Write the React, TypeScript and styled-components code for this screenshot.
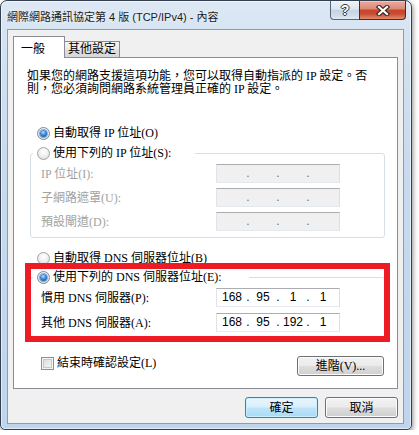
import React from 'react';
import styled, { createGlobalStyle, css } from 'styled-components';

const GlobalStyle = createGlobalStyle`
  html, body { margin: 0; padding: 0; background: #ffffff; }
  body {
    font-family: "Liberation Serif", "Noto Sans CJK TC", serif;
    font-size: 12px;
    color: #000;
  }
`;

const Window = styled.div`
  box-sizing: border-box;
  width: 412px;
  height: 430px;
  border: 1px solid #34404f;
  border-radius: 7px 7px 5px 5px;
  background: linear-gradient(180deg, #dde8f4 0%, #d4e2f1 10%, #c7daef 40%, #bed5ed 100%);
  box-shadow: 1px 2px 5px rgba(0, 0, 0, 0.45), inset 0 0 0 1px rgba(255, 255, 255, 0.55);
  padding: 0 7px 5px 6px;
  display: flex;
  flex-direction: column;
`;

const TitleBar = styled.div`
  height: 28px;
  flex: none;
  display: flex;
  align-items: flex-start;
  margin-right: -2px;
`;

const Title = styled.div`
  flex: 1;
  margin-top: 8px;
  font-family: "Liberation Sans", "Noto Sans CJK TC", sans-serif;
  font-size: 11px;
  line-height: 16px;
  color: #1b1b1b;
  white-space: nowrap;
  text-shadow: 0 0 5px rgba(255, 255, 255, 0.9);
`;

const CaptionGroup = styled.div`
  display: flex;
`;

const CaptionButton = styled.div<{ $close?: boolean }>`
  box-sizing: border-box;
  height: 19px;
  display: flex;
  align-items: center;
  justify-content: center;
  border: 1px solid;
  border-top: none;
  ${(p) =>
    p.$close
      ? css`
          width: 47px;
          border-color: #5b241b;
          border-radius: 0 0 4px 0;
          background: linear-gradient(180deg, #eaab9d 0%, #dd8b79 42%, #c6462e 52%, #c94b32 72%, #e28c6e 100%);
          box-shadow: inset 0 1px 0 rgba(255, 255, 255, 0.35);
        `
      : css`
          width: 29px;
          border-color: #5a6576;
          border-right: none;
          border-radius: 0 0 0 4px;
          background: linear-gradient(180deg, #edf3f9 0%, #dde7f1 45%, #c6d3e2 52%, #d0dcea 80%, #e0e9f3 100%);
          box-shadow: inset 0 1px 0 rgba(255, 255, 255, 0.6);
        `}
`;

const HelpGlyph = styled.span`
  font-family: "Liberation Sans", sans-serif;
  font-weight: bold;
  font-size: 14px;
  line-height: 14px;
  color: #ffffff;
  text-shadow: 1px 0 0 #2c3644, -1px 0 0 #2c3644, 0 1px 0 #2c3644, 0 -1px 0 #2c3644;
`;

const Client = styled.div`
  box-sizing: border-box;
  flex: 1;
  background: #f0f0f0;
  border: 1px solid #8f9cad;
  padding: 6px 5px 5px 5px;
  display: flex;
  flex-direction: column;
`;

const TabStrip = styled.div`
  display: flex;
  align-items: flex-end;
  height: 22px;
  margin-bottom: -1px;
  position: relative;
  z-index: 1;
  flex: none;
`;

const Tab = styled.div<{ $active?: boolean }>`
  box-sizing: border-box;
  border: 1px solid #898c95;
  border-bottom: none;
  line-height: 14px;
  white-space: nowrap;
  ${(p) =>
    p.$active
      ? css`
          width: 52px;
          height: 22px;
          padding: 5px 0 0 7px;
          background: #ffffff;
        `
      : css`
          width: 55px;
          height: 16px;
          margin-bottom: 1px;
          border-left: none;
          padding: 0 0 0 3px;
          background: linear-gradient(180deg, #f4f4f4 0%, #ececec 48%, #dedede 52%, #d8d8d8 100%);
        `}
`;

const Panel = styled.div`
  box-sizing: border-box;
  flex: none;
  height: 332px;
  background: #ffffff;
  border: 1px solid #898c95;
  padding: 12px 12px 0 13px;
  position: relative;
  display: flex;
  flex-direction: column;
`;

const Description = styled.p`
  margin: 0;
  line-height: 13px;
  white-space: nowrap;
`;

const OptionRow = styled.label<{ $mt: number }>`
  display: flex;
  align-items: center;
  gap: 3px;
  height: 14px;
  line-height: 14px;
  margin: ${(p) => p.$mt}px 0 0 10px;
  white-space: nowrap;
`;

const Radio = styled.span<{ $checked?: boolean }>`
  box-sizing: border-box;
  flex: none;
  width: 13px;
  height: 13px;
  border-radius: 50%;
  border: 1px solid ${(p) => (p.$checked ? '#7a8a9c' : '#a3a3a3')};
  background: radial-gradient(circle at 50% 35%, #ffffff 0%, #f1f1f1 45%, #d4d4d4 100%);
  display: flex;
  align-items: center;
  justify-content: center;
  &::after {
    content: '';
    display: ${(p) => (p.$checked ? 'block' : 'none')};
    width: 7px;
    height: 7px;
    border-radius: 50%;
    background: radial-gradient(circle at 45% 35%, #b4e2ff 0%, #3b90e2 40%, #0b4c9c 90%);
    box-shadow: 0 0 0 1px rgba(30, 70, 130, 0.45);
  }
`;

const Group = styled.fieldset<{ $mt: number }>`
  margin: ${(p) => p.$mt}px 0 0 3px;
  padding: 4px 0 6px 10px;
  border: 1px solid #d5dfe5;
  border-radius: 3px;
  min-width: 0;
`;

const Legend = styled.legend<{ $width: number }>`
  box-sizing: border-box;
  width: ${(p) => p.$width}px;
  margin-left: -8px;
  padding: 0 0 0 4px;
  height: 14px;
  background: #ffffff;
`;

const LegendInner = styled.span`
  display: flex;
  align-items: center;
  gap: 3px;
  height: 14px;
  line-height: 14px;
  white-space: nowrap;
`;

const FieldRows = styled.div<{ $gap: number }>`
  display: grid;
  row-gap: ${(p) => p.$gap}px;
`;

const FieldRow = styled.div`
  display: flex;
  align-items: center;
  height: 19px;
`;

const FieldLabel = styled.span<{ $disabled?: boolean }>`
  flex: none;
  width: 175px;
  line-height: 14px;
  white-space: nowrap;
  color: ${(p) => (p.$disabled ? '#a2a2a2' : '#000000')};
`;

const IpField = styled.div<{ $disabled?: boolean }>`
  box-sizing: border-box;
  width: 124px;
  height: 19px;
  border: 1px solid;
  border-color: #abadb3 #dbdfe6 #e3e9ef #e2e3ea;
  background: ${(p) => (p.$disabled ? '#f0f0f0' : '#ffffff')};
  padding-left: 2px;
  display: grid;
  grid-template-columns: 26px 6px 24px 6px 24px 6px 24px;
  align-items: center;
  font-family: "Liberation Sans", sans-serif;
  font-size: 12px;
  line-height: 17px;
  color: ${(p) => (p.$disabled ? '#6d6d6d' : '#000000')};
`;

const Octet = styled.span`
  text-align: center;
`;

const Dot = styled.span`
  text-align: center;
`;

const BottomRow = styled.div`
  display: flex;
  align-items: flex-start;
  justify-content: space-between;
  margin: 17px 1px 0 14px;
`;

const CheckLabel = styled.label`
  display: flex;
  align-items: center;
  gap: 3px;
  height: 14px;
  line-height: 14px;
  white-space: nowrap;
`;

const CheckBox = styled.span`
  box-sizing: border-box;
  flex: none;
  width: 13px;
  height: 13px;
  border: 1px solid #8e8f8f;
  background: linear-gradient(135deg, #d9d9d9 0%, #ececec 60%, #f7f7f7 100%);
  box-shadow: inset 0 0 0 1px #f4f4f4, inset 0 0 0 2px #c9c9c9;
`;

const PushButton = styled.button<{ $default?: boolean; $w: number; $h: number }>`
  box-sizing: border-box;
  width: ${(p) => p.$w}px;
  height: ${(p) => p.$h}px;
  padding: 0;
  font-family: "Liberation Serif", "Noto Sans CJK TC", serif;
  font-size: 12px;
  line-height: 14px;
  color: #000;
  border-radius: 3px;
  border: 1px solid ${(p) => (p.$default ? '#3c7fb1' : '#707070')};
  background: ${(p) =>
    p.$default
      ? 'linear-gradient(180deg, #e9f5fc 0%, #d9effb 48%, #bde5fb 52%, #a9daf5 100%)'
      : 'linear-gradient(180deg, #f2f2f2 0%, #ebebeb 48%, #dddddd 52%, #cfcfcf 100%)'};
  box-shadow: inset 0 0 0 1px ${(p) => (p.$default ? '#c8f0ff' : '#fcfcfc')};
  white-space: nowrap;
`;

const ButtonBar = styled.div`
  display: flex;
  justify-content: flex-end;
  gap: 7px;
  margin-top: 8px;
`;

const Annotation = styled.div`
  position: absolute;
  left: 11px;
  top: 205px;
  width: 365px;
  height: 79px;
  box-sizing: border-box;
  border: 6px solid #ed1c24;
  pointer-events: none;
`;

type IpProps = { value?: string[]; disabled?: boolean };

function IpInput({ value, disabled }: IpProps) {
  const parts = value ?? ['', '', '', ''];
  return (
    <IpField $disabled={disabled}>
      <Octet>{parts[0]}</Octet>
      <Dot>.</Dot>
      <Octet>{parts[1]}</Octet>
      <Dot>.</Dot>
      <Octet>{parts[2]}</Octet>
      <Dot>.</Dot>
      <Octet>{parts[3]}</Octet>
    </IpField>
  );
}

function CloseGlyph() {
  return (
    <svg width="14" height="11" viewBox="0 0 14 11">
      <g strokeLinecap="square">
        <path d="M3 2 L11 9 M11 2 L3 9" stroke="#3a2a28" strokeWidth="4.4" />
        <path d="M3 2 L11 9 M11 2 L3 9" stroke="#ffffff" strokeWidth="2.2" />
      </g>
    </svg>
  );
}

export default function App() {
  return (
    <>
      <GlobalStyle />
      <Window>
        <TitleBar>
          <Title>網際網路通訊協定第 4 版 (TCP/IPv4) - 內容</Title>
          <CaptionGroup>
            <CaptionButton>
              <HelpGlyph>?</HelpGlyph>
            </CaptionButton>
            <CaptionButton $close>
              <CloseGlyph />
            </CaptionButton>
          </CaptionGroup>
        </TitleBar>
        <Client>
          <TabStrip>
            <Tab $active>一般</Tab>
            <Tab>其他設定</Tab>
          </TabStrip>
          <Panel>
            <Description>
              如果您的網路支援這項功能，您可以取得自動指派的 IP 設定。否
              <br />
              則，您必須詢問網路系統管理員正確的 IP 設定。
            </Description>

            <OptionRow $mt={30}>
              <Radio $checked />
              自動取得 IP 位址(O)
            </OptionRow>

            <Group $mt={6}>
              <Legend $width={162}>
                <LegendInner>
                  <Radio />
                  使用下列的 IP 位址(S):
                </LegendInner>
              </Legend>
              <FieldRows $gap={5}>
                <FieldRow>
                  <FieldLabel $disabled>IP 位址(I):</FieldLabel>
                  <IpInput disabled />
                </FieldRow>
                <FieldRow>
                  <FieldLabel $disabled>子網路遮罩(U):</FieldLabel>
                  <IpInput disabled />
                </FieldRow>
                <FieldRow>
                  <FieldLabel $disabled>預設閘道(D):</FieldLabel>
                  <IpInput disabled />
                </FieldRow>
              </FieldRows>
            </Group>

            <OptionRow $mt={13}>
              <Radio />
              自動取得 DNS 伺服器位址(B)
            </OptionRow>

            <Group $mt={5}>
              <Legend $width={216}>
                <LegendInner>
                  <Radio $checked />
                  使用下列的 DNS 伺服器位址(E):
                </LegendInner>
              </Legend>
              <FieldRows $gap={6}>
                <FieldRow>
                  <FieldLabel>慣用 DNS 伺服器(P):</FieldLabel>
                  <IpInput value={['168', '95', '1', '1']} />
                </FieldRow>
                <FieldRow>
                  <FieldLabel>其他 DNS 伺服器(A):</FieldLabel>
                  <IpInput value={['168', '95', '192', '1']} />
                </FieldRow>
              </FieldRows>
            </Group>

            <BottomRow>
              <CheckLabel>
                <CheckBox />
                結束時確認設定(L)
              </CheckLabel>
              <PushButton $w={87} $h={20}>進階(V)...</PushButton>
            </BottomRow>

            <Annotation />
          </Panel>
          <ButtonBar>
            <PushButton $default $w={73} $h={21}>確定</PushButton>
            <PushButton $w={73} $h={21}>取消</PushButton>
          </ButtonBar>
        </Client>
      </Window>
    </>
  );
}
